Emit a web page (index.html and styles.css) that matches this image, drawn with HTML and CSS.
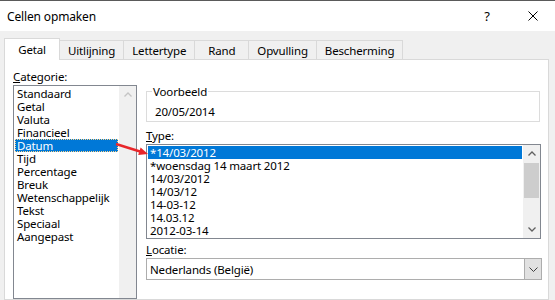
FILE: index.html
```html
<!DOCTYPE html>
<html lang="nl">
<head>
    <meta charset="UTF-8">
    <meta name="viewport" content="width=device-width, initial-scale=1.0">
    <title>Cellen opmaken</title>
    <link rel="stylesheet" href="styles.css">
</head>
<body>
    <div class="titlebar">
        <span class="title">Cellen opmaken</span>
        <span class="tb-btn help">?</span>
        <span class="tb-btn close">
            <svg width="10" height="10" viewBox="0 0 10 10"><path d="M0.5 0.5 L9.5 9.5 M9.5 0.5 L0.5 9.5" stroke="#000" stroke-width="1"/></svg>
        </span>
    </div>

    <div class="tabs">
        <div class="tab active">Getal</div>
        <div class="tab">Uitlijning</div>
        <div class="tab">Lettertype</div>
        <div class="tab">Rand</div>
        <div class="tab">Opvulling</div>
        <div class="tab">Bescherming</div>
    </div>

    <div class="panel">
        <div class="col-left">
            <div class="label"><u>C</u>ategorie:</div>
            <div class="listbox cat-list">
                <div class="items">
                    <div class="item">Standaard</div>
                    <div class="item">Getal</div>
                    <div class="item">Valuta</div>
                    <div class="item">Financieel</div>
                    <div class="item selected focus">Datum</div>
                    <div class="item">Tijd</div>
                    <div class="item">Percentage</div>
                    <div class="item">Breuk</div>
                    <div class="item">Wetenschappelijk</div>
                    <div class="item">Tekst</div>
                    <div class="item">Speciaal</div>
                    <div class="item">Aangepast</div>
                </div>
                <div class="scrollbar">
                    <div class="sb-arrow disabled">
                        <svg width="8" height="5" viewBox="0 0 8 5"><path d="M0.5 4.5 L4 1 L7.5 4.5" fill="none" stroke="currentColor" stroke-width="1.3"/></svg>
                    </div>
                </div>
            </div>
        </div>

        <div class="col-right">
            <fieldset class="group">
                <legend>Voorbeeld</legend>
                <div class="sample">20/05/2014</div>
            </fieldset>

            <div class="label type-label"><u>T</u>ype:</div>
            <div class="listbox type-list">
                <div class="items">
                    <div class="item selected">*14/03/2012</div>
                    <div class="item">*woensdag 14 maart 2012</div>
                    <div class="item">14/03/2012</div>
                    <div class="item">14/03/12</div>
                    <div class="item">14-03-12</div>
                    <div class="item">14.03.12</div>
                    <div class="item">2012-03-14</div>
                </div>
                <div class="scrollbar">
                    <div class="sb-arrow">
                        <svg width="8" height="5" viewBox="0 0 8 5"><path d="M0.5 4.5 L4 1 L7.5 4.5" fill="none" stroke="currentColor" stroke-width="1.3"/></svg>
                    </div>
                    <div class="sb-thumb"></div>
                    <div class="sb-space"></div>
                    <div class="sb-arrow">
                        <svg width="8" height="5" viewBox="0 0 8 5"><path d="M0.5 0.5 L4 4 L7.5 0.5" fill="none" stroke="currentColor" stroke-width="1.3"/></svg>
                    </div>
                </div>
            </div>

            <div class="label loc-label"><u>L</u>ocatie:</div>
            <div class="combo">
                <span class="combo-text">Nederlands (België)</span>
                <span class="combo-btn">
                    <svg width="9" height="5" viewBox="0 0 9 5"><path d="M0.5 0.5 L4.5 4.5 L8.5 0.5" fill="none" stroke="#404040" stroke-width="1"/></svg>
                </span>
            </div>
        </div>
    </div>

    <!-- red annotation arrow drawn over the dialog -->
    <svg class="annotation" width="555" height="300" viewBox="0 0 555 300">
        <line x1="116" y1="143" x2="140" y2="150.5" stroke="#e8262a" stroke-width="2.5"/>
        <polygon points="148,153 140.6,146.5 138.2,154.1" fill="#e8262a"/>
    </svg>
</body>
</html>
```

FILE: styles.css
```css
* {
    box-sizing: border-box;
}
body {
    margin: 0;
    width: 555px;
    height: 300px;
    overflow: hidden;
    background: #f0f0f0;
    border-top: 1px solid #5a5a5a;
    font-family: "Noto Sans", "Open Sans", sans-serif;
    font-size: 11.5px;
    letter-spacing: -0.15px;
    color: #000;
    display: flex;
    flex-direction: column;
    position: relative;
}
u {
    text-underline-offset: 1px;
}

.titlebar {
    height: 30px;
    background: #fff;
    display: flex;
    align-items: center;
    flex-shrink: 0;
}
.title {
    flex: 1;
    padding-left: 7px;
    font-size: 12px;
}
.tb-btn {
    height: 30px;
    display: flex;
    align-items: center;
    justify-content: center;
}
.help {
    width: 46px;
    font-size: 13px;
}
.close {
    width: 45px;
}

.tabs {
    display: flex;
    align-items: flex-end;
    height: 21px;
    margin-top: 7px;
    padding-left: 4px;
    flex-shrink: 0;
}
.tab {
    height: 19px;
    min-width: 55px;
    line-height: 17px;
    padding: 1px 8px 0;
    border: 1px solid #d9d9d9;
    border-bottom: none;
    margin-left: -1px;
    background: #f0f0f0;
    text-align: center;
}
.tab.active {
    margin-left: 0;
    min-width: 56px;
    height: 22px;
    line-height: 20px;
    margin-bottom: -1px;
    padding: 1px 12px 0;
    background: #fff;
    position: relative;
    z-index: 1;
}

.panel {
    flex: 1;
    margin: 0 6px 0 4px;
    border: 1px solid #d9d9d9;
    background: #fff;
    padding: 10px 6px 0 8px;
    display: flex;
    gap: 9px;
}
.col-left {
    width: 124px;
    display: flex;
    flex-direction: column;
}
.col-right {
    flex: 1;
    display: flex;
    flex-direction: column;
}
.label {
    line-height: 13px;
    margin-bottom: 2px;
}

.listbox {
    border: 1px solid #828790;
    display: flex;
}
.cat-list {
    flex: 1;
}
.items {
    flex: 1;
    padding: 1px;
}
.item {
    height: 13px;
    line-height: 13px;
    padding-left: 2px;
    white-space: nowrap;
}
.item.selected {
    background: #0078d7;
    color: #fff;
}
.item.focus {
    outline: 1px dotted #ffd58a;
    outline-offset: -1px;
}

.scrollbar {
    width: 17px;
    background: #f0f0f0;
    display: flex;
    flex-direction: column;
}
.sb-arrow {
    height: 17px;
    display: flex;
    align-items: center;
    justify-content: center;
    color: #606060;
}
.sb-arrow.disabled {
    color: #c4c4c4;
}
.sb-thumb {
    height: 35px;
    margin: 1px 1px 0;
    background: #cdcdcd;
}
.sb-space {
    flex: 1;
}

.group {
    margin: 15px 2px 0 0;
    padding: 0 8px 3px 8px;
    border: 1px solid #dcdcdc;
}
.group legend {
    line-height: 13px;
    padding: 0 1px;
    margin-left: -3px;
}
.sample {
    line-height: 13px;
    margin-top: 7px;
}

.type-label {
    margin-top: 7px;
}
.type-list {
    height: 95px;
    margin-right: 1px;
}
.loc-label {
    margin-top: 4px;
}

.combo {
    height: 22px;
    border: 1px solid #adadad;
    display: flex;
    align-items: center;
}
.combo-text {
    flex: 1;
    padding-left: 3px;
}
.combo-btn {
    width: 17px;
    height: 100%;
    background: #e1e1e1;
    border-left: 1px solid #adadad;
    display: flex;
    align-items: center;
    justify-content: center;
}

.annotation {
    position: absolute;
    left: 0;
    top: 0;
    pointer-events: none;
}
```
